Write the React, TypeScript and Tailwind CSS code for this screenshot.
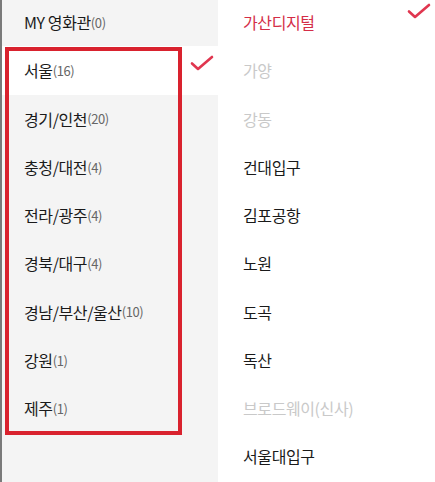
const regions = [
  { name: "MY 영화관", count: 0 },
  { name: "서울", count: 16 },
  { name: "경기/인천", count: 20 },
  { name: "충청/대전", count: 4 },
  { name: "전라/광주", count: 4 },
  { name: "경북/대구", count: 4 },
  { name: "경남/부산/울산", count: 10 },
  { name: "강원", count: 1 },
  { name: "제주", count: 1 },
];

const theaters = [
  { name: "가산디지털", state: "active" },
  { name: "가양", state: "off" },
  { name: "강동", state: "off" },
  { name: "건대입구", state: "" },
  { name: "김포공항", state: "" },
  { name: "노원", state: "" },
  { name: "도곡", state: "" },
  { name: "독산", state: "" },
  { name: "브로드웨이(신사)", state: "off" },
  { name: "서울대입구", state: "" },
];

function Check({ className }: { className?: string }) {
  return (
    <svg viewBox="0 0 24 16" className={className} fill="none">
      <path d="M2 8.5l6 5.5L22 2" stroke="#e0364f" strokeWidth="2.6" strokeLinecap="round" strokeLinejoin="round" />
    </svg>
  );
}

export default function App() {
  return (
    <div
      className="relative flex w-[435px] h-[482px] overflow-hidden bg-white text-[#1a1a1a]"
      style={{ fontFamily: '"Noto Sans CJK KR", "Noto Sans", sans-serif' }}
    >
      <ul className="w-[218px] shrink-0 bg-[#f4f4f4] border-l-2 border-[#7a7a7a] -mt-[2px]">
        {regions.map((r, i) => (
          <li
            key={r.name}
            className={`relative flex items-center h-[48.25px] pl-[22px] ${i === 1 ? "bg-white w-[435px]" : ""}`}
          >
            <span className="text-[16px] tracking-[-0.4px]">{r.name}</span>
            <span className="text-[13px] text-[#666] tracking-[-0.4px] pt-[1px]">({r.count})</span>
            {i === 1 && <Check className="absolute left-[188px] top-[9px] w-[24px] h-[16px]" />}
          </li>
        ))}
      </ul>
      <ul className="relative flex-1 -mt-[2px] bg-white">
        {theaters.map((t) => (
          <li key={t.name} className="relative flex items-center h-[48.25px] pl-[25px]">
            <span
              className={`text-[16px] tracking-[-0.4px] ${
                t.state === "active" ? "text-[#d42d47]" : t.state === "off" ? "text-[#c9c9c9]" : "text-[#1a1a1a]"
              }`}
            >
              {t.name}
            </span>
          </li>
        ))}
        <Check className="absolute left-[189px] top-[5px] w-[24px] h-[16px]" />
      </ul>
      <div className="absolute left-[5px] top-[47px] w-[177px] h-[388px] border-[4px] border-[#d9222e] pointer-events-none" />
    </div>
  );
}
